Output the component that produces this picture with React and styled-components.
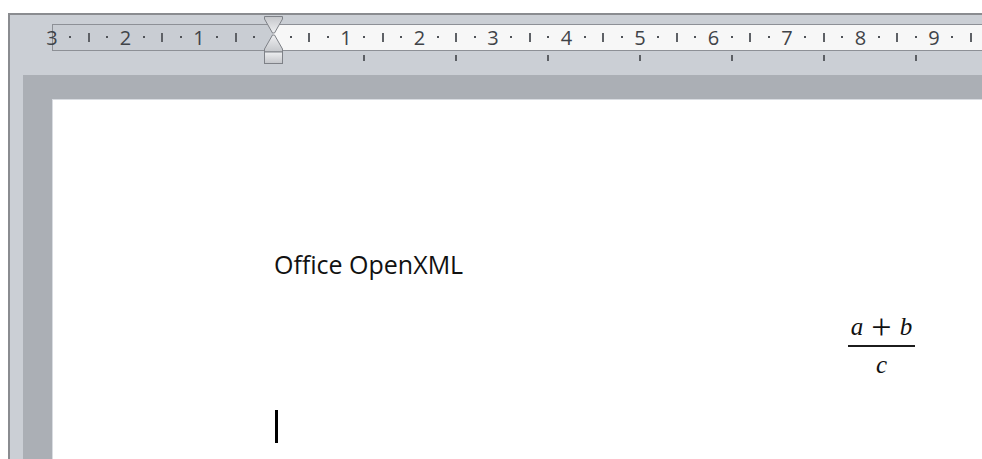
import React from "react";
import styled, { createGlobalStyle } from "styled-components";

const GlobalStyle = createGlobalStyle`
  html, body {
    margin: 0;
    padding: 0;
    background: #ffffff;
    overflow: hidden;
  }
  body {
    font-family: "Open Sans", "Noto Sans", sans-serif;
  }
`;

/* ruler geometry, in px at the current zoom */
const UNIT = 73.5; // one centimetre
const ZERO = 219.5; // left margin position inside the ruler track
const TAB = 91.9; // default tab stop spacing (1.25 cm)

const Window = styled.div`
  margin: 13px 0 0 8px;
  height: calc(100vh - 13px);
  border-top: 2px solid #8a8c90;
  border-left: 2px solid #8a8c90;
  background: #cbcfd5;
  display: flex;
  flex-direction: column;
  overflow: hidden;
`;

const RulerBar = styled.div`
  flex: 0 0 60px;
  padding: 9px 0 0 42px;
  box-sizing: border-box;
  display: flex;
  flex-direction: column;
  gap: 3px;
`;

const RulerTrack = styled.div`
  position: relative;
  height: 25px;
  border: 1px solid #8d9096;
  border-right: none;
  display: flex;
`;

const MarginZone = styled.div`
  flex: 0 0 ${ZERO}px;
  background: #c9cdd3;
`;

const TextZone = styled.div`
  flex: 1;
  background: #f7f7f7;
`;

const Number = styled.span`
  position: absolute;
  top: 0;
  transform: translateX(-50%);
  font-family: "Open Sans", "Noto Sans", sans-serif;
  font-size: 20px;
  line-height: 25px;
  color: #3f4348;
`;

const Dot = styled.span`
  position: absolute;
  top: 11px;
  width: 2px;
  height: 2px;
  margin-left: -1px;
  background: #4f5257;
`;

const Bar = styled.span`
  position: absolute;
  top: 8px;
  width: 2px;
  height: 9px;
  margin-left: -1px;
  background: #5e6166;
`;

const IndentMarker = styled.svg`
  position: absolute;
  left: 211px;
  top: -9px;
  width: 19px;
  height: 48px;
  overflow: visible;
`;

const TabRow = styled.div`
  position: relative;
  height: 7px;
  margin-left: 1px;
`;

const TabTick = styled.span`
  position: absolute;
  top: 1px;
  width: 2px;
  height: 6px;
  margin-left: -1px;
  background: #5c5f64;
`;

const Workspace = styled.div`
  flex: 1;
  margin-left: 13px;
  background: #abafb5;
  padding: 24px 0 0 29px;
  display: flex;
  min-height: 0;
`;

const Page = styled.div`
  flex: 1;
  background: #ffffff;
  border-top: 1px solid #d9dce1;
  border-left: 1px solid #d9dce1;
  padding-left: 221px;
  display: flex;
  flex-direction: column;
  align-items: flex-start;
`;

const Paragraph = styled.p`
  margin: 148px 0 0 0;
  font-family: "Open Sans", "Noto Sans", sans-serif;
  font-size: 25px;
  line-height: 32px;
  color: #111;
`;

const Equation = styled.div`
  margin: 29px 0 0 574px;
  width: 67px;
  display: flex;
  flex-direction: column;
  align-items: center;
  font-family: "Liberation Serif", "DejaVu Serif", serif;
  color: #111;
`;

const Row = styled.div`
  display: flex;
  align-items: baseline;
  justify-content: center;
  gap: ${(p) => p.$gap || 0}px;
  height: 28px;
  line-height: 28px;
`;

const Var = styled.span`
  font-style: italic;
  font-size: 25px;
`;

const Op = styled.span`
  font-family: "Liberation Serif", serif;
  font-size: 36px;
  line-height: 28px;
  position: relative;
  top: 4px;
`;

const FractionBar = styled.div`
  align-self: stretch;
  height: 2px;
  margin: 8px 0 4px;
  background: #1c1c1c;
`;

const Caret = styled.span`
  display: block;
  margin: 31px 0 0 1px;
  width: 3px;
  height: 33px;
  background: #000;
`;

function rulerMarks() {
  const marks = [];
  for (let q = -12; q <= 38; q++) {
    const pos = q / 4;
    const x = ZERO + pos * UNIT;
    if (q === 0) continue;
    if (q % 4 === 0) {
      marks.push(
        <Number key={q} style={{ left: x }}>
          {Math.abs(pos)}
        </Number>
      );
    } else if (q % 2 === 0) {
      marks.push(<Bar key={q} style={{ left: x }} />);
    } else {
      marks.push(<Dot key={q} style={{ left: x }} />);
    }
  }
  return marks;
}

function tabStops() {
  const stops = [];
  for (let i = 1; i <= 7; i++) {
    stops.push(<TabTick key={i} style={{ left: ZERO + i * TAB }} />);
  }
  return stops;
}

function Marker() {
  return (
    <IndentMarker viewBox="0 0 19 48">
      <defs>
        <linearGradient id="mk" x1="0" y1="0" x2="0" y2="1">
          <stop offset="0" stopColor="#c4c6ca" />
          <stop offset="1" stopColor="#eeeff1" />
        </linearGradient>
        <linearGradient id="mk2" x1="0" y1="0" x2="0" y2="1">
          <stop offset="0" stopColor="#eeeff1" />
          <stop offset="1" stopColor="#c4c6ca" />
        </linearGradient>
      </defs>
      {/* first-line indent */}
      <path
        d="M0.5 0.5 H18.5 V3 L10.5 17 H8.5 L0.5 3 Z"
        fill="url(#mk)"
        stroke="#7e8187"
      />
      {/* hanging indent */}
      <path
        d="M8.5 19 H10.5 L18.5 33 V36 H0.5 V33 Z"
        fill="url(#mk2)"
        stroke="#7e8187"
      />
      {/* left indent */}
      <rect
        x="0.5"
        y="36"
        width="18"
        height="11.5"
        fill="url(#mk2)"
        stroke="#7e8187"
      />
    </IndentMarker>
  );
}

export default function App() {
  return (
    <>
      <GlobalStyle />
      <Window>
        <RulerBar>
          <RulerTrack>
            <MarginZone />
            <TextZone />
            {rulerMarks()}
            <Marker />
          </RulerTrack>
          <TabRow>{tabStops()}</TabRow>
        </RulerBar>
        <Workspace>
          <Page>
            <Paragraph>Office OpenXML</Paragraph>
            <Equation>
              <Row $gap={8}>
                <Var>a</Var>
                <Op>+</Op>
                <Var>b</Var>
              </Row>
              <FractionBar />
              <Row>
                <Var>c</Var>
              </Row>
            </Equation>
            <Caret />
          </Page>
        </Workspace>
      </Window>
    </>
  );
}
